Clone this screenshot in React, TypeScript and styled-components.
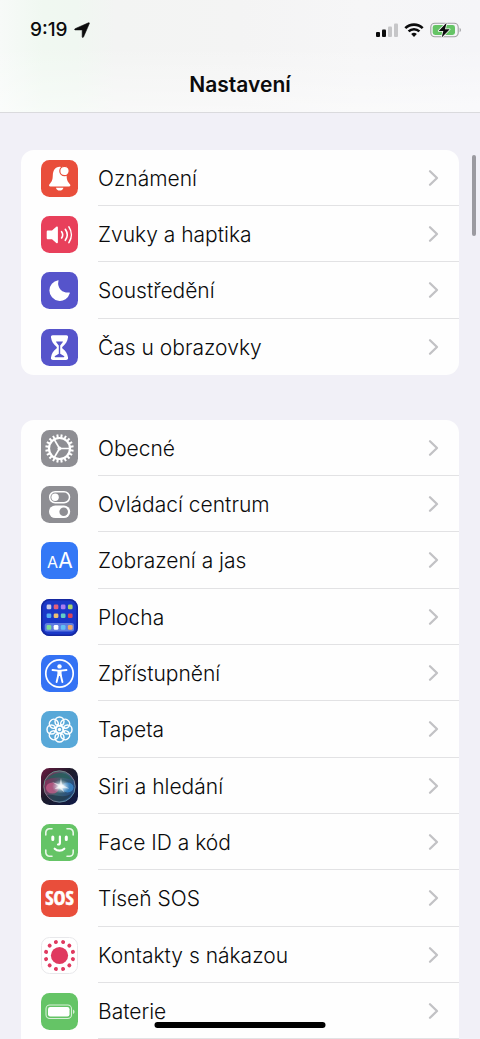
import React from "react";
import styled, { createGlobalStyle, css } from "styled-components";

const GlobalStyle = createGlobalStyle`
  *, *::before, *::after { box-sizing: border-box; }
  body {
    margin: 0;
    background: #f1f0f7;
    color: #0b0b0c;
    font-family: Inter, "Liberation Sans", sans-serif;
  }
`;

const Screen = styled.div`
  position: relative;
  height: 100vh;
  overflow: hidden;
`;

const Header = styled.header`
  height: 113px;
  border-bottom: 1px solid #dadadd;
  background:
    linear-gradient(180deg, rgba(255, 255, 255, 0) 40%, rgba(255, 255, 255, 0.45) 100%),
    linear-gradient(90deg, #f7faf8 0%, #f0f8f1 9%, #f0f7f1 16%, #f3f4f3 24%, #f4f4f4 50%, #f6f6f7 75%, #f5f5f8 100%);
`;

const StatusBar = styled.div`
  display: flex;
  align-items: center;
  justify-content: space-between;
  height: 59px;
  padding: 0 18px 0 30px;
`;

const Clock = styled.div`
  display: flex;
  align-items: center;
  gap: 6px;
  font-size: 19px;
  line-height: 24px;
  font-weight: 500;
`;

const Indicators = styled.div`
  display: flex;
  align-items: center;
  gap: 6px;
`;

const Title = styled.h1`
  margin: 0;
  padding-top: 12px;
  font-size: 21px;
  line-height: 28px;
  font-weight: 600;
  text-align: center;
`;

const Content = styled.main`
  display: flex;
  flex-direction: column;
  gap: 45px;
  padding: 37px 21px 0;
`;

const Label = styled.span`
  padding-top: 2px;
`;

const RowBody = styled.div`
  flex: 1;
  align-self: stretch;
  display: flex;
  align-items: center;
  justify-content: space-between;
  padding-right: 20px;
  border-bottom: 1px solid #e2e2e4;
  font-size: 21px;
  line-height: 28px;
  font-weight: 300;
  white-space: nowrap;
`;

const Group = styled.ul<{ $continues?: boolean }>`
  list-style: none;
  margin: 0;
  padding: 0;
  background: #fefefe;
  border-radius: ${(p) => (p.$continues ? "13px 13px 0 0" : "13px")};
  overflow: hidden;

  li:nth-child(3n) > a {
    height: 57px;
  }
  ${(p) =>
    !p.$continues &&
    css`
      li:last-child ${RowBody} {
        border-bottom-color: transparent;
      }
    `}
`;

const RowLink = styled.a`
  display: flex;
  align-items: center;
  gap: 20px;
  height: 56px;
  padding-left: 20px;
  color: inherit;
  text-decoration: none;
`;

const Tile = styled.svg`
  flex: none;
  display: block;
  width: 37px;
  height: 37px;
`;

const ScrollThumb = styled.div`
  position: absolute;
  top: 155px;
  right: 4px;
  width: 4px;
  height: 81px;
  border-radius: 2px;
  background: #9b9aa0;
`;

const HomeIndicator = styled.div`
  position: absolute;
  bottom: 11px;
  left: 50%;
  width: 171px;
  height: 6px;
  border-radius: 3px;
  background: #000;
  transform: translateX(-50%);
`;

const Chevron = () => (
  <svg width="11" height="18" viewBox="0 0 11 18" fill="none" stroke="#c2c2c5" strokeWidth="2.3" strokeLinecap="round" strokeLinejoin="round" aria-hidden="true">
    <path d="M2 2.2 9 9 2 15.8" />
  </svg>
);

const Icon = ({ fill, children }: { fill: string; children: React.ReactNode }) => (
  <Tile viewBox="0 0 37 37" aria-hidden="true">
    <rect width="37" height="37" rx="8.5" fill={fill} />
    {children}
  </Tile>
);

const ring = (count: number, offset = 0) =>
  Array.from({ length: count }, (_, i) => offset + (360 / count) * i);

const BellIcon = () => (
  <Icon fill="#e94e3b">
    <path d="M18.7 6.8c-4.7 0-6.7 3.8-6.9 8.5-.2 5-.8 6.3-3.3 8.9-.9 1-.5 2.3.9 2.3H28c1.400 0 1.800-1.300.9-2.300-2.500-2.600-3.100-3.900-3.300-8.900-.2-4.700-2.200-8.500-6.900-8.500Z" fill="#fff" />
    <path d="M15 27.700h7.400c-.3 1.700-1.700 2.900-3.700 2.900s-3.400-1.200-3.700-2.900Z" fill="#fff" />
    <circle cx="23.5" cy="11" r="4.700" fill="#fff" stroke="#e94e3b" strokeWidth="1.200" />
  </Icon>
);

const SpeakerIcon = () => (
  <Icon fill="#e8405b">
    <path d="M7 14.5h4l4.300-3.700c.8-.7 1.600-.3 1.600.7v14.800c0 1-.8 1.400-1.600.7L11 23.200H7c-.8 0-1.300-.5-1.300-1.300v-6.100c0-.8.5-1.300 1.300-1.300Z" fill="#fff" />
    <g fill="none" stroke="#fff" strokeWidth="1.6" strokeLinecap="round">
      <path d="M20.600 15.700a5.500 5.500 0 0 1 0 6.300" />
      <path d="M24.300 13.300a9.500 9.500 0 0 1 0 11" />
      <path d="M27.900 10.900a14 14 0 0 1 0 15.700" />
    </g>
  </Icon>
);

const MoonIcon = () => (
  <Icon fill="#5654cb">
    <path d="M17.200 8.200A10.400 10.400 0 1 0 28.800 21.300c.2-.7-.3-1-.9-.8A9.300 9.300 0 0 1 17.400 9.200c.2-.6.2-1-.2-1Z" fill="#fff" />
  </Icon>
);

const HourglassIcon = () => (
  <Icon fill="#5654cb">
    <path d="M11.700 6.200h13.600c1.500 0 2 1 1.700 2.300-.6 4.200-2.200 6.400-5.200 8.900-.9.800-.9 1.500 0 2.300 3 2.500 4.600 4.700 5.200 8.900.3 1.300-.2 2.300-1.700 2.300H11.700c-1.500 0-2-1-1.700-2.300.6-4.200 2.200-6.400 5.200-8.900.9-.8.9-1.500 0-2.300-3-2.500-4.600-4.700-5.200-8.900-.3-1.300.2-2.300 1.700-2.300Z" fill="#fff" />
    <path d="M15 12.600h7c-.7 1.700-1.700 2.700-2.800 3.800v8.400l3.800 2.200c.6.500.4 1.200-.3 1.200h-8.400c-.7 0-.9-.7-.3-1.200l3.800-2.200v-8.400c-1.100-1.100-2.100-2.100-2.800-3.800Z" fill="#5654cb" />
  </Icon>
);

const GearIcon = () => (
  <Icon fill="#8e8e93">
    <g stroke="#fff" fill="none" transform="translate(18.5 18.5)">
      {ring(20, 9).map((a) => (
        <path key={a} d="M0-10V-14.200" strokeWidth="2" transform={`rotate(${a})`} />
      ))}
      <circle r="10.500" strokeWidth="2.200" />
      {ring(3, 90).map((a) => (
        <path key={a} d="M0 0V-10" strokeWidth="1.700" transform={`rotate(${a})`} />
      ))}
      <circle r="1.700" fill="#fff" strokeWidth=".5" />
    </g>
  </Icon>
);

const TogglesIcon = () => (
  <Icon fill="#8e8e93">
    <rect x="8.700" y="5.800" width="19.800" height="10.900" rx="5.450" fill="none" stroke="#fff" strokeWidth="1.5" />
    <circle cx="14.100" cy="11.200" r="3.700" fill="#fff" />
    <rect x="8" y="19.400" width="21.200" height="12.600" rx="6.300" fill="#fff" />
    <circle cx="22.700" cy="25.700" r="4.300" fill="#8e8e93" />
  </Icon>
);

const TextSizeIcon = () => (
  <Icon fill="#3478f6">
    <g fill="#fff" fontFamily="Inter, sans-serif" fontWeight="400" textAnchor="middle">
      <text x="11.500" y="25.600" fontSize="16">A</text>
      <text x="24.500" y="25.600" fontSize="21">A</text>
    </g>
  </Icon>
);

const appColors = [
  ["#c9cbe6", "#e4607a", "#a97cf0", "#a6d16c"],
  ["#55aef0", "#f0c071", "#62cfc6", "#dc4559"],
];
const dockColors = ["#7fdc94", "#ffffff", "#62bff5", "#efa869"];

const HomeScreenIcon = () => (
  <Icon fill="#1a38c8">
    <rect x=".8" y=".8" width="35.400" height="35.400" rx="7.800" fill="none" stroke="#1528a0" strokeWidth="1.600" />
    {appColors.map((row, r) =>
      row.map((color, c) => (
        <rect key={`${r}${c}`} x={5.6 + c * 7.1} y={5.6 + r * 8.8} width="4.700" height="4.700" rx="1.300" fill={color} />
      )),
    )}
    <rect x="3.700" y="24" width="29.300" height="8.600" rx="2.500" fill="#5f7ce0" />
    {dockColors.map((color, c) => (
      <rect key={color} x={5.6 + c * 7.1} y="26" width="4.700" height="4.700" rx="1.300" fill={color} />
    ))}
  </Icon>
);

const AccessibilityIcon = () => (
  <Icon fill="#3472f4">
    <circle cx="18.5" cy="18.5" r="13.700" fill="none" stroke="#fff" strokeWidth="1.700" />
    <circle cx="18.5" cy="11.400" r="2.200" fill="#fff" />
    <path d="M11.500 15 17 15.700h3l5.500-.7" fill="none" stroke="#fff" strokeWidth="1.800" strokeLinecap="round" />
    <path d="M16.400 15h4.200v6h-4.200Z" fill="#fff" />
    <path d="M17.300 20 15.600 27M19.700 20 21.400 27" fill="none" stroke="#fff" strokeWidth="1.900" strokeLinecap="round" />
  </Icon>
);

const FlowerIcon = () => (
  <Icon fill="#58a8d8">
    <g transform="translate(18.5 18.5)" fill="none" stroke="#fff" strokeWidth="1.5">
      {ring(8).map((a) => (
        <circle key={a} cy="-8" r="4.500" transform={`rotate(${a})`} />
      ))}
      <circle r="3.900" />
      <circle r="1.700" fill="#fff" stroke="none" />
      {ring(8, 22.5).map((a) => (
        <path key={a} d="M0-3.900V-6" strokeWidth="1.100" transform={`rotate(${a})`} />
      ))}
    </g>
  </Icon>
);

const SiriIcon = () => (
  <Icon fill="url(#siri-base)">
    <defs>
      <linearGradient id="siri-base" x1="0" y1="0" x2="1" y2="1">
        <stop offset="0" stopColor="#6b1a40" />
        <stop offset=".45" stopColor="#1c1b2b" />
        <stop offset="1" stopColor="#101a48" />
      </linearGradient>
      <linearGradient id="siri-orb" x1="0" y1=".3" x2="1" y2=".7">
        <stop offset="0" stopColor="#8a2755" />
        <stop offset=".5" stopColor="#3f6470" />
        <stop offset="1" stopColor="#1e4585" />
      </linearGradient>
      <radialGradient id="siri-glow">
        <stop offset="0" stopColor="#fff" />
        <stop offset=".25" stopColor="#eef8fb" stopOpacity=".9" />
        <stop offset="1" stopColor="#b0cbe0" stopOpacity="0" />
      </radialGradient>
      <linearGradient id="siri-rim" x1="0" y1="0" x2="1" y2="1">
        <stop offset="0" stopColor="#4fae8f" />
        <stop offset=".5" stopColor="#94758d" />
        <stop offset="1" stopColor="#4ea6b5" />
      </linearGradient>
    </defs>
    <circle cx="18.5" cy="18.5" r="15.700" fill="url(#siri-orb)" stroke="url(#siri-rim)" strokeWidth=".9" />
    <path d="M4.500 13C9 4 25 1 32 13 26 9 12 8 4.500 13Z" fill="#275c5a" opacity=".8" />
    <path d="M6 27c6-2 17 5 25-2-5 10-19 11-25 2Z" fill="#233b4e" opacity=".8" />
    <ellipse cx="11.500" cy="20" rx="6.500" ry="5.500" fill="#d8608f" opacity=".65" />
    <ellipse cx="26.500" cy="19.500" rx="6" ry="5" fill="#3f91d6" opacity=".75" />
    <ellipse cx="20" cy="18.500" rx="9" ry="7" fill="url(#siri-glow)" />
    <path d="M11 14 18.500 16.500 20 10l1.200 6.500 7 4-7-.5 2.300 4.500-5-4-5 .5 4-3Z" fill="#fff" opacity=".6" />
  </Icon>
);

const FaceIdIcon = () => (
  <Icon fill="#65c466">
    <g fill="none" stroke="#fff" strokeLinecap="round">
      <g strokeWidth="1.600" opacity=".85">
        <path d="M4.800 11V8.500a3.700 3.700 0 0 1 3.700-3.700H11" />
        <path d="M26 4.800h2.500a3.700 3.700 0 0 1 3.700 3.700V11" />
        <path d="M32.200 26v2.500a3.700 3.700 0 0 1-3.700 3.700H26" />
        <path d="M11 32.200H8.500a3.700 3.700 0 0 1-3.700-3.700V26" />
      </g>
      <path d="M11.800 13v2.500M25.300 13v2.500" strokeWidth="3" />
      <path d="M18.900 12.500v6.200c0 1.200-.5 1.800-1.900 1.800" strokeWidth="2.200" />
      <path d="M13.700 24.700c2.700 2.500 6.900 2.500 9.600 0" strokeWidth="2.200" />
    </g>
  </Icon>
);

const SosIcon = () => (
  <Icon fill="#e94e3b">
    <text x="18.5" y="25.300" fill="#fff" stroke="#fff" strokeWidth=".6" fontFamily="'Open Sans Condensed', 'Liberation Sans Narrow', Roboto, sans-serif" fontSize="20" fontWeight="700" textAnchor="middle">SOS</text>
  </Icon>
);

const ExposureIcon = () => (
  <Icon fill="#fff">
    <rect x=".5" y=".5" width="36" height="36" rx="8" fill="none" stroke="#e8e8eb" />
    <g transform="translate(18.5 18.5)" fill="#e03a60">
      <circle r="8.600" />
      {ring(12, 15).map((a) => (
        <circle key={a} cy="-13.900" r="2" transform={`rotate(${a})`} />
      ))}
    </g>
  </Icon>
);

const BatteryTileIcon = () => (
  <Icon fill="#65c466">
    <rect x="5" y="12" width="25.500" height="13.500" rx="3.800" fill="none" stroke="#fff" strokeWidth="1.100" opacity=".75" />
    <rect x="7" y="14" width="21.500" height="9.500" rx="2.200" fill="#fff" />
    <path d="M32 16.500c2 .8 2 3.700 0 4.500Z" fill="#fff" opacity=".75" />
  </Icon>
);

const LocationArrow = () => (
  <svg width="16" height="16" viewBox="0 0 16 16" role="img" aria-label="Poloha">
    <path d="M14.500.8c.7-.3 1.100.2.8.8L9.500 15c-.3.700-1.300.6-1.300-.2V8.300c0-.3-.1-.4-.4-.4H1.300c-.8 0-.9-.9-.2-1.200Z" fill="#0b0b0c" stroke="#0b0b0c" strokeWidth=".6" />
  </svg>
);

const Signal = () => (
  <svg width="22" height="16" viewBox="0 0 22 16" role="img" aria-label="Signál">
    <rect x="0" y="10" width="4" height="5" rx="1" fill="#0b0b0c" />
    <rect x="6" y="7.500" width="4" height="7.500" rx="1" fill="#0b0b0c" />
    <rect x="12" y="4.500" width="4" height="10.500" rx="1" fill="#c6c6c8" />
    <rect x="18" y="1.500" width="4" height="13.500" rx="1" fill="#c6c6c8" />
  </svg>
);

const Wifi = () => (
  <svg width="20" height="16" viewBox="0 0 20 16" fill="none" stroke="#0b0b0c" strokeWidth="2.600" role="img" aria-label="Wi-Fi">
    <path d="M1.300 6.100a12.500 12.500 0 0 1 17.400 0" />
    <path d="M4.600 9.400a7.800 7.800 0 0 1 10.800 0" />
    <path d="M10 14.900 7.200 12a4 4 0 0 1 5.600 0Z" fill="#0b0b0c" stroke="none" />
  </svg>
);

const Battery = () => (
  <svg width="32" height="16" viewBox="0 0 32 16" role="img" aria-label="Baterie se nabíjí">
    <rect x=".8" y="1.300" width="27.400" height="13.400" rx="4" fill="none" stroke="#a0a0a2" strokeWidth="1.100" />
    <rect x="2.700" y="3.100" width="22.300" height="9.800" rx="2.400" fill="#65c466" />
    <path d="M29.600 5.800c1.800.7 1.800 3.700 0 4.400Z" fill="#a0a0a2" />
    <path d="M16.600.8 8.700 8.900h4.600L11.700 15.400l8-8.200h-4.700Z" fill="#0b0b0c" stroke="#f4f6f4" strokeWidth="1.600" strokeLinejoin="round" paintOrder="stroke" />
  </svg>
);

type Item = { label: string; icon: React.ComponentType };

const alerts: Item[] = [
  { label: "Oznámení", icon: BellIcon },
  { label: "Zvuky a haptika", icon: SpeakerIcon },
  { label: "Soustředění", icon: MoonIcon },
  { label: "Čas u obrazovky", icon: HourglassIcon },
];

const general: Item[] = [
  { label: "Obecné", icon: GearIcon },
  { label: "Ovládací centrum", icon: TogglesIcon },
  { label: "Zobrazení a jas", icon: TextSizeIcon },
  { label: "Plocha", icon: HomeScreenIcon },
  { label: "Zpřístupnění", icon: AccessibilityIcon },
  { label: "Tapeta", icon: FlowerIcon },
  { label: "Siri a hledání", icon: SiriIcon },
  { label: "Face ID a kód", icon: FaceIdIcon },
  { label: "Tíseň SOS", icon: SosIcon },
  { label: "Kontakty s nákazou", icon: ExposureIcon },
  { label: "Baterie", icon: BatteryTileIcon },
];

const SettingsGroup = ({ items, continues }: { items: Item[]; continues?: boolean }) => (
  <Group $continues={continues}>
    {items.map(({ label, icon: Glyph }) => (
      <li key={label}>
        <RowLink href="#">
          <Glyph />
          <RowBody>
            <Label>{label}</Label>
            <Chevron />
          </RowBody>
        </RowLink>
      </li>
    ))}
  </Group>
);

export default function App() {
  return (
    <Screen>
      <GlobalStyle />
      <Header>
        <StatusBar>
          <Clock>
            9:19
            <LocationArrow />
          </Clock>
          <Indicators>
            <Signal />
            <Wifi />
            <Battery />
          </Indicators>
        </StatusBar>
        <Title>Nastavení</Title>
      </Header>
      <Content>
        <SettingsGroup items={alerts} />
        <SettingsGroup items={general} continues />
      </Content>
      <ScrollThumb />
      <HomeIndicator />
    </Screen>
  );
}
